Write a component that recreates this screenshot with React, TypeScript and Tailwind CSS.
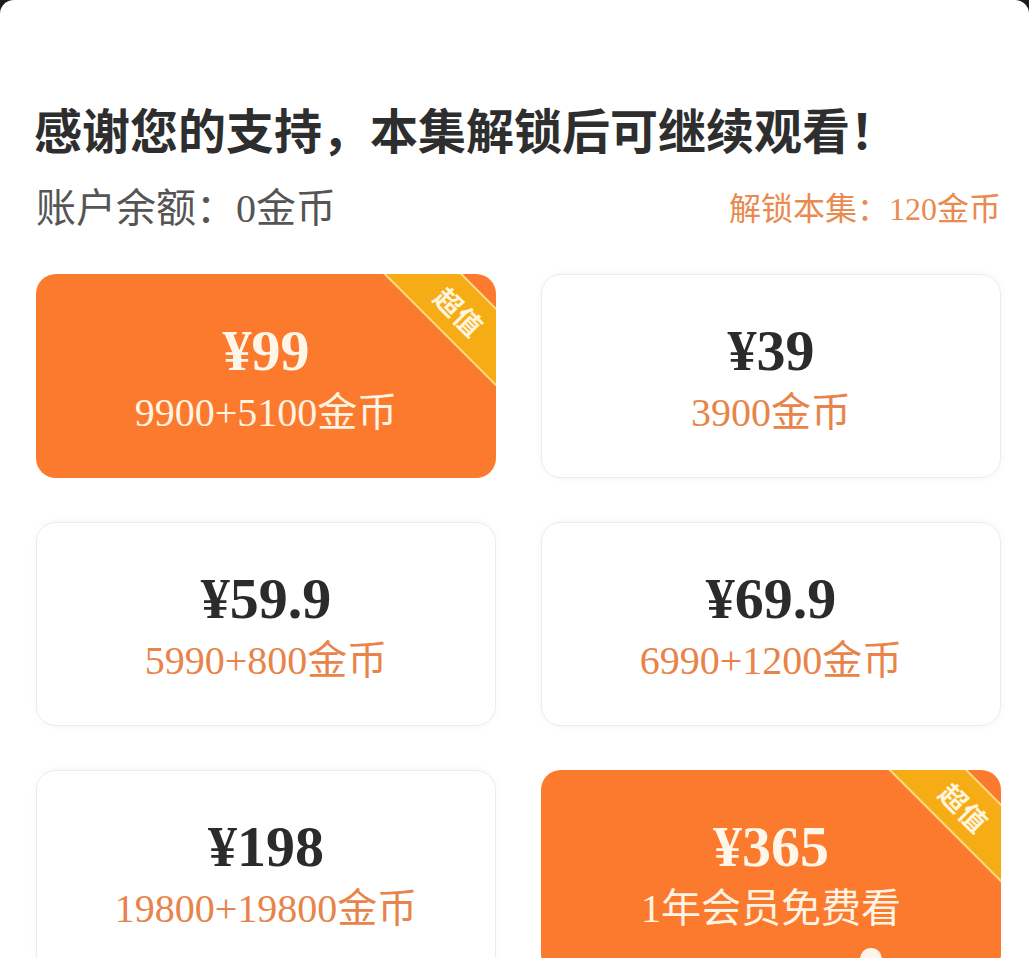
import React from 'react';

type Plan = {
  price: string;
  desc: string;
  hot?: boolean;
  dot?: boolean;
};

const plans: Plan[] = [
  { price: '¥99', desc: '9900+5100金币', hot: true },
  { price: '¥39', desc: '3900金币' },
  { price: '¥59.9', desc: '5990+800金币' },
  { price: '¥69.9', desc: '6990+1200金币' },
  { price: '¥198', desc: '19800+19800金币' },
  { price: '¥365', desc: '1年会员免费看', hot: true, dot: true },
];

const serif = "font-['Liberation_Serif','Noto_Sans_CJK_SC',serif]";

const PlanCard = ({ plan }: { plan: Plan }) => {
  return (
    <div
      className={
        plan.hot
          ? 'relative overflow-hidden rounded-[20px] bg-[#fb7a2d] h-[204px] flex flex-col items-center justify-center'
          : 'relative overflow-hidden rounded-[20px] bg-white border border-[#ececec] shadow-[0_0_8px_rgba(0,0,0,0.04)] h-[204px] flex flex-col items-center justify-center'
      }
    >
      {/* corner ribbon */}
      {plan.hot && (
        <div className="absolute right-[-74px] top-[9px] w-[220px] h-[56px] rotate-45 bg-[#f6ac14] border-y-2 border-[#ffd98a] flex items-center justify-center">
          <span className="font-['Noto_Sans_CJK_SC',sans-serif] font-bold text-[27px] leading-none text-[#fff4de] tracking-[1px]">
            超值
          </span>
        </div>
      )}
      <div
        className={`${serif} font-bold text-[58px] leading-[64px] mt-[6px] ${plan.hot ? 'text-[#fff6ea]' : 'text-[#2b2b2b]'}`}
      >
        {plan.price}
      </div>
      <div
        className={`${serif} text-[40px] leading-[52px] mt-[4px] ${plan.hot ? 'text-[#fff3e4]' : 'text-[#e8844a]'}`}
      >
        {plan.desc}
      </div>
      {plan.dot && (
        <div className="absolute left-[319px] top-[178px] w-[22px] h-[22px] rounded-full bg-[#fff4ea]" />
      )}
    </div>
  );
};

export default function App() {
  return (
    <div className="h-screen w-full overflow-hidden bg-[#1c1c1c]">
      <div className="h-full bg-white rounded-t-[14px] pl-[36px] pr-[28px] pt-[97px]">
        <h1 className="font-['Noto_Sans_CJK_SC',sans-serif] font-bold text-[48px] leading-[62px] text-[#2e2e2e] -ml-[2px]">
          感谢您的支持，本集解锁后可继续观看！
        </h1>
        <div className="mt-[25px] h-[50px] flex items-center justify-between">
          <span className={`${serif} text-[40px] text-[#555555]`}>账户余额：0金币</span>
          <span className={`${serif} text-[32px] text-[#e98a4f]`}>解锁本集：120金币</span>
        </div>
        <div className="mt-[40px] grid grid-cols-2 gap-x-[45px] gap-y-[44px]">
          {plans.map((p) => (
            <PlanCard key={p.price} plan={p} />
          ))}
        </div>
      </div>
    </div>
  );
}
